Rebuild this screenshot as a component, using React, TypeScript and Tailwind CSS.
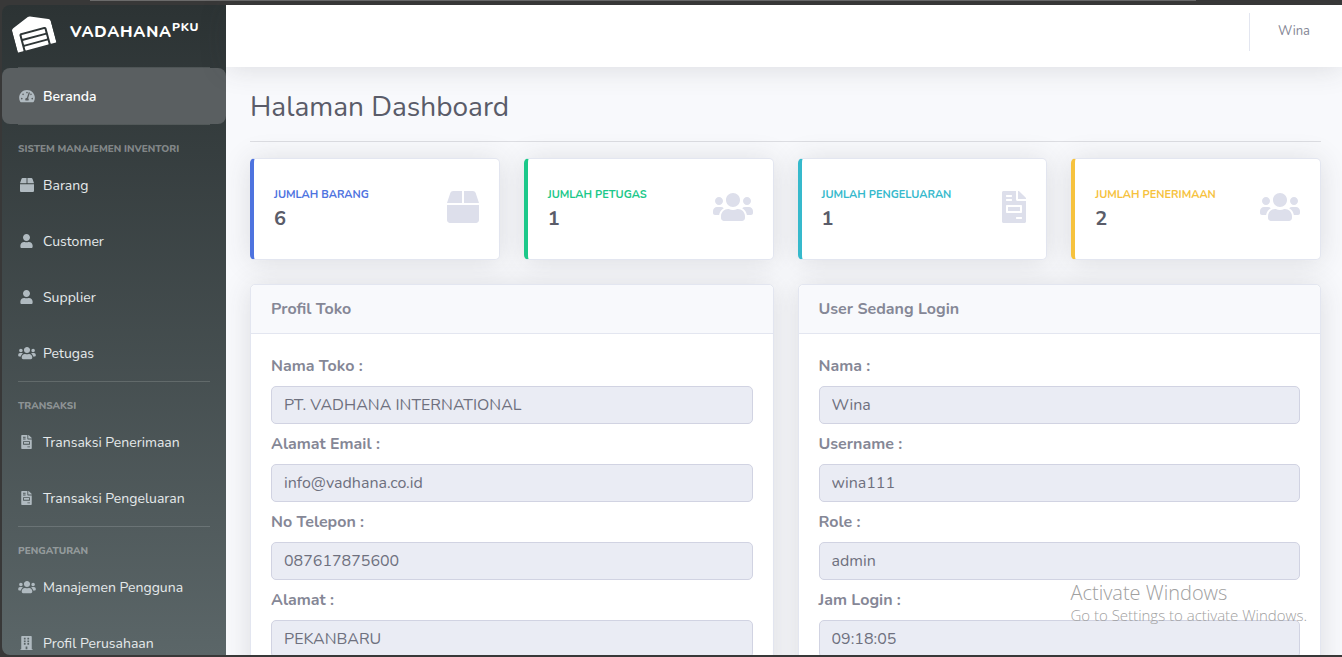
import type { ComponentType } from "react";
import {
  FaBox,
  FaBuilding,
  FaFileInvoice,
  FaTachometerAlt,
  FaUser,
  FaUsers,
  FaWarehouse,
} from "react-icons/fa";

type Icon = ComponentType<{ className?: string }>;

type NavItem = { label: string; icon: Icon; iconWidth: string };
type NavSection = { title: string; items: NavItem[] };

const home: NavItem = { label: "Beranda", icon: FaTachometerAlt, iconWidth: "w-4" };

const sections: NavSection[] = [
  {
    title: "Sistem Manajemen Inventori",
    items: [
      { label: "Barang", icon: FaBox, iconWidth: "w-[14px]" },
      { label: "Customer", icon: FaUser, iconWidth: "w-[13px]" },
      { label: "Supplier", icon: FaUser, iconWidth: "w-[13px]" },
      { label: "Petugas", icon: FaUsers, iconWidth: "w-[18px]" },
    ],
  },
  {
    title: "Transaksi",
    items: [
      { label: "Transaksi Penerimaan", icon: FaFileInvoice, iconWidth: "w-[11px]" },
      { label: "Transaksi Pengeluaran", icon: FaFileInvoice, iconWidth: "w-[11px]" },
    ],
  },
  {
    title: "Pengaturan",
    items: [
      { label: "Manajemen Pengguna", icon: FaUsers, iconWidth: "w-[18px]" },
      { label: "Profil Perusahaan", icon: FaBuilding, iconWidth: "w-[13px]" },
    ],
  },
];

const stats = [
  {
    label: "Jumlah Barang",
    value: 6,
    icon: FaBox,
    iconWidth: "w-8",
    border: "border-l-[#4e73df]",
    text: "text-[#4e73df]",
  },
  {
    label: "Jumlah Petugas",
    value: 1,
    icon: FaUsers,
    iconWidth: "w-10",
    border: "border-l-[#1cc88a]",
    text: "text-[#1cc88a]",
  },
  {
    label: "Jumlah Pengeluaran",
    value: 1,
    icon: FaFileInvoice,
    iconWidth: "w-6",
    border: "border-l-[#36b9cc]",
    text: "text-[#36b9cc]",
  },
  {
    label: "Jumlah Penerimaan",
    value: 2,
    icon: FaUsers,
    iconWidth: "w-10",
    border: "border-l-[#f6c23e]",
    text: "text-[#f6c23e]",
  },
];

const storeFields = [
  { id: "nama-toko", label: "Nama Toko :", value: "PT. VADHANA INTERNATIONAL" },
  { id: "email", label: "Alamat Email :", value: "info@vadhana.co.id" },
  { id: "telepon", label: "No Telepon :", value: "087617875600" },
  { id: "alamat", label: "Alamat :", value: "PEKANBARU" },
];

const userFields = [
  { id: "nama", label: "Nama :", value: "Wina" },
  { id: "username", label: "Username :", value: "wina111" },
  { id: "role", label: "Role :", value: "admin" },
  { id: "jam-login", label: "Jam Login :", value: "09:18:05" },
];

function NavLink({ item, active = false }: { item: NavItem; active?: boolean }) {
  const ItemIcon = item.icon;
  return (
    <a
      href="#"
      className={
        active
          ? "flex h-14 items-center gap-2 rounded-lg bg-[#5a5f61] px-4 text-sm font-semibold text-white"
          : "flex h-14 items-center gap-2 px-4 text-sm text-[#e6eaeb]"
      }
    >
      <span className="flex w-[17px] shrink-0 justify-center">
        <ItemIcon className={`h-[14px] shrink-0 text-[#b0bac0] ${item.iconWidth}`} />
      </span>
      <span className="pt-px">{item.label}</span>
    </a>
  );
}

function Divider() {
  return <hr className="mx-4 border-t border-white/15" />;
}

function Sidebar() {
  return (
    <nav className="w-56 shrink-0 overflow-hidden rounded-l-lg bg-linear-to-b from-[#2c3334] to-[#5b6668]">
      <a href="#" className="flex h-[62px] items-center gap-[17px] pb-2 pl-[11px] text-white">
        <FaWarehouse className="h-9 w-10 -rotate-15" />
        <span className="text-base leading-6 font-extrabold tracking-[0.8px]">
          VADAHANA<sup className="text-xs">PKU</sup>
        </span>
      </a>
      <Divider />
      <NavLink item={home} active />
      {sections.map((section) => (
        <section key={section.title}>
          <Divider />
          <h2 className="h-8 px-4 pt-4 text-[10px] leading-4 font-extrabold text-white/40 uppercase">
            {section.title}
          </h2>
          {section.items.map((item) => (
            <NavLink key={item.label} item={item} />
          ))}
        </section>
      ))}
    </nav>
  );
}

function StatCard({ stat }: { stat: (typeof stats)[number] }) {
  const StatIcon = stat.icon;
  return (
    <div
      className={`flex h-[102px] items-center justify-between rounded-[5px] border border-l-4 border-[#e3e6f0] bg-white px-5 shadow-[0_2px_28px_rgba(58,59,69,0.15)] ${stat.border}`}
    >
      <div>
        <div className={`mb-1 text-[11px] leading-4 font-bold uppercase ${stat.text}`}>{stat.label}</div>
        <div className="text-xl leading-6 font-bold text-[#5a5c69]">{stat.value}</div>
      </div>
      <StatIcon className={`mb-1 h-8 shrink-0 text-[#dddfeb] ${stat.iconWidth}`} />
    </div>
  );
}

function Panel({ title, fields }: { title: string; fields: typeof storeFields }) {
  return (
    <section className="rounded-[5px] border border-[#e3e6f0] bg-white shadow-[0_2px_28px_rgba(58,59,69,0.15)]">
      <h2 className="rounded-t-[5px] border-b border-[#e3e6f0] bg-[#f8f9fc] px-5 py-3 leading-6 font-bold text-[#858796]">
        {title}
      </h2>
      <div className="flex flex-col gap-2 p-5">
        {fields.map((field) => (
          <div key={field.id} className="flex flex-col gap-2">
            <label htmlFor={field.id} className="leading-6 font-bold text-[#858796]">
              {field.label}
            </label>
            <input
              id={field.id}
              readOnly
              defaultValue={field.value}
              className="h-[38px] w-full rounded-[5px] border border-[#d1d3e2] bg-[#eaecf4] px-3 text-base text-[#6e707e] outline-none"
            />
          </div>
        ))}
      </div>
    </section>
  );
}

export default function App() {
  return (
    <div className="relative flex h-screen flex-col overflow-hidden bg-[#383838] pb-0.5 pl-0.5 font-['Nunito','Open_Sans',sans-serif]">
      <div className="h-[5px] shrink-0 pr-[146px] pl-[88px]">
        <div className="h-px bg-[#6b6b6b]" />
      </div>
      <div className="flex min-h-0 flex-1">
        <Sidebar />
        <div className="flex min-w-0 flex-1 flex-col bg-[#f8f9fc]">
          <header className="flex h-[62px] shrink-0 items-center justify-end gap-7 bg-white pr-8 pb-2 shadow-[0_2px_28px_rgba(58,59,69,0.15)]">
            <div className="h-[38px] border-l border-[#e3e6f0]" />
            <a href="#" className="text-[13px] text-[#858796]">
              Wina
            </a>
          </header>
          <main className="min-h-0 flex-1 overflow-y-auto pt-[22px] pr-[21px] pb-6 pl-6 [scrollbar-width:none]">
            <h1 className="text-[28px] leading-9 text-[#5a5c69]">Halaman Dashboard</h1>
            <hr className="my-4 border-t border-[#dcdde2]" />
            <div className="grid grid-cols-4 gap-6">
              {stats.map((stat) => (
                <StatCard key={stat.label} stat={stat} />
              ))}
            </div>
            <div className="mt-6 grid grid-cols-2 gap-6">
              <Panel title="Profil Toko" fields={storeFields} />
              <Panel title="User Sedang Login" fields={userFields} />
            </div>
          </main>
        </div>
      </div>
      <div className="pointer-events-none absolute right-[35px] bottom-8 font-['Open_Sans',sans-serif] font-light text-[#a0a0a0]">
        <div className="text-xl leading-6">Activate Windows</div>
        <div className="text-[15px] leading-5">Go to Settings to activate Windows.</div>
      </div>
    </div>
  );
}
